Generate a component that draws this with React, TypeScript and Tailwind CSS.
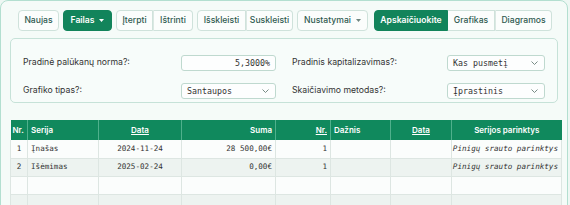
import React from "react";

const sans = "font-['Inter','Noto_Sans',sans-serif]";
const mono = "font-['DejaVu_Sans_Mono','Liberation_Mono',monospace]";

function Caret({ light }: { light?: boolean }) {
    return (
        <svg width="5" height="3" viewBox="0 0 5 3" className="ml-[5px]">
            <path d="M0 0h5L2.5 3z" fill={light ? "#ffffff" : "#6f8580"} />
        </svg>
    );
}

function Btn({ children, primary, caret, className = "" }: { children: React.ReactNode; primary?: boolean; caret?: boolean; className?: string }) {
    return (
        <button
            className={
                "h-[21px] text-[8.6px] leading-none flex items-center justify-center border " +
                (primary ? "bg-[#12845b] border-[#12845b] text-white font-semibold" : "bg-[#fbfdfc] border-[#cfe2db] text-[#2f5a50] font-medium") +
                " " + className
            }
        >
            {children}
            {caret && <Caret light={primary} />}
        </button>
    );
}

function Select({ value, className = "" }: { value: string; className?: string }) {
    return (
        <div className={"h-[16px] border border-[#bfd9cf] rounded-[3px] bg-[#fdfefe] flex items-center justify-between pl-[5px] pr-[6px] " + className}>
            <span className={mono + " text-[8.3px] text-[#333]"}>{value}</span>
            <svg width="7" height="4" viewBox="0 0 7 4" fill="none" stroke="#6b7f79" strokeWidth="0.9"><path d="M0.5 0.5l3 3 3-3" /></svg>
        </div>
    );
}

const rows = [
    { nr: "1", serija: "Įnašas", data: "2024-11-24", suma: "28 500,00€", nr2: "1" },
    { nr: "2", serija: "Išėmimas", data: "2025-02-24", suma: "0,00€", nr2: "1" },
    null,
    null,
];

const th = "border-r border-[#4fb08c] font-semibold";
const td = "border-r border-[#dde6e2]";

export default function App() {
    return (
        <div className={"w-[570px] h-[205px] overflow-hidden bg-[#eef7f3] " + sans}>
            <div className="w-[568px] h-[230px] border border-[#b3dfd0] rounded-[8px] bg-[#f5fbf8] pt-[9px] px-[9px]">
                <div className="flex items-center pl-[8px]">
                    <Btn className="w-[41px] rounded-[4px]">Naujas</Btn>
                    <Btn primary caret className="w-[49px] ml-[4px] rounded-[4px]">Failas</Btn>
                    <div className="flex ml-[4px]">
                        <Btn className="w-[37px] rounded-l-[4px]">Įterpti</Btn>
                        <Btn className="w-[40px] rounded-r-[4px] border-l-[#dbe8e3]">Ištrinti</Btn>
                    </div>
                    <div className="flex ml-[4px]">
                        <Btn className="w-[49px] rounded-l-[4px]">Išskleisti</Btn>
                        <Btn className="w-[47px] rounded-r-[4px] border-l-[#dbe8e3]">Suskleisti</Btn>
                    </div>
                    <Btn caret className="w-[71px] ml-[4px] rounded-[4px]">Nustatymai</Btn>
                    <div className="flex ml-[6px]">
                        <Btn primary className="w-[74px] rounded-l-[4px]">Apskaičiuokite</Btn>
                        <Btn className="w-[47px] border-l-0">Grafikas</Btn>
                        <Btn className="w-[57px] rounded-r-[4px] border-l-[#dbe8e3]">Diagramos</Btn>
                    </div>
                </div>

                <div className="mt-[7px] h-[65px] border border-[#c6e2d8] rounded-[5px] bg-[#f7fcfa] pl-[12px] pr-[12px] pt-[13px] grid grid-cols-2 gap-x-[16px] gap-y-[6px] text-[8.7px] text-[#333]">
                    <div className="flex items-center justify-between">
                        <span>Pradinė palūkanų norma?:</span>
                        <div className="w-[95px] h-[16px] border border-[#bfd9cf] rounded-[3px] bg-[#fdfefe] flex items-center justify-end pr-[5px]">
                            <span className={mono + " text-[8.3px] text-[#333]"}>5,3000%</span>
                        </div>
                    </div>
                    <div className="flex items-center justify-between">
                        <span>Pradinis kapitalizavimas?:</span>
                        <Select value="Kas pusmetį" className="w-[98px]" />
                    </div>
                    <div className="flex items-center justify-between">
                        <span>Grafiko tipas?:</span>
                        <Select value="Santaupos" className="w-[95px]" />
                    </div>
                    <div className="flex items-center justify-between">
                        <span>Skaičiavimo metodas?:</span>
                        <Select value="Įprastinis" className="w-[98px]" />
                    </div>
                </div>

                <table className="mt-[17px] table-fixed border-collapse w-[551px]">
                    <colgroup>
                        <col className="w-[17px]" />
                        <col className="w-[71px]" />
                        <col className="w-[83px]" />
                        <col className="w-[94px]" />
                        <col className="w-[55px]" />
                        <col className="w-[60px]" />
                        <col className="w-[61px]" />
                        <col className="w-[110px]" />
                    </colgroup>
                    <thead>
                        <tr className="h-[20px] bg-[#10895d] text-white text-[8px]">
                            <th className={"text-left pl-[2px] " + th}>Nr.</th>
                            <th className={"text-left pl-[3px] " + th}>Serija</th>
                            <th className={"text-center underline " + th}>Data</th>
                            <th className={"text-right pr-[3px] " + th}>Suma</th>
                            <th className={"text-right pr-[3px] underline " + th}>Nr.</th>
                            <th className={"text-left pl-[3px] " + th}>Dažnis</th>
                            <th className={"text-center underline " + th}>Data</th>
                            <th className="text-center font-semibold">Serijos parinktys</th>
                        </tr>
                    </thead>
                    <tbody className={mono + " text-[7.6px] text-[#333]"}>
                        {rows.map((r, i) => (
                            <tr key={i} className={"h-[18px] border-b border-[#dde6e2] " + (i % 2 ? "bg-[#edf3f0]" : "bg-[#fbfdfc]")}>
                                <td className={"text-center border-l border-[#dde6e2] " + td}>{r?.nr}</td>
                                <td className={"pl-[3px] " + td}>{r?.serija}</td>
                                <td className={"text-center " + td}>{r?.data}</td>
                                <td className={"text-right pr-[3px] " + td}>{r?.suma}</td>
                                <td className={"text-right pr-[3px] " + td}>{r?.nr2}</td>
                                <td className={td}></td>
                                <td className={td}></td>
                                <td className={"text-right pr-[3px] italic whitespace-nowrap overflow-hidden " + td}>{r ? "Pinigų srauto parinktys" : ""}</td>
                            </tr>
                        ))}
                    </tbody>
                </table>
            </div>
        </div>
    );
}
